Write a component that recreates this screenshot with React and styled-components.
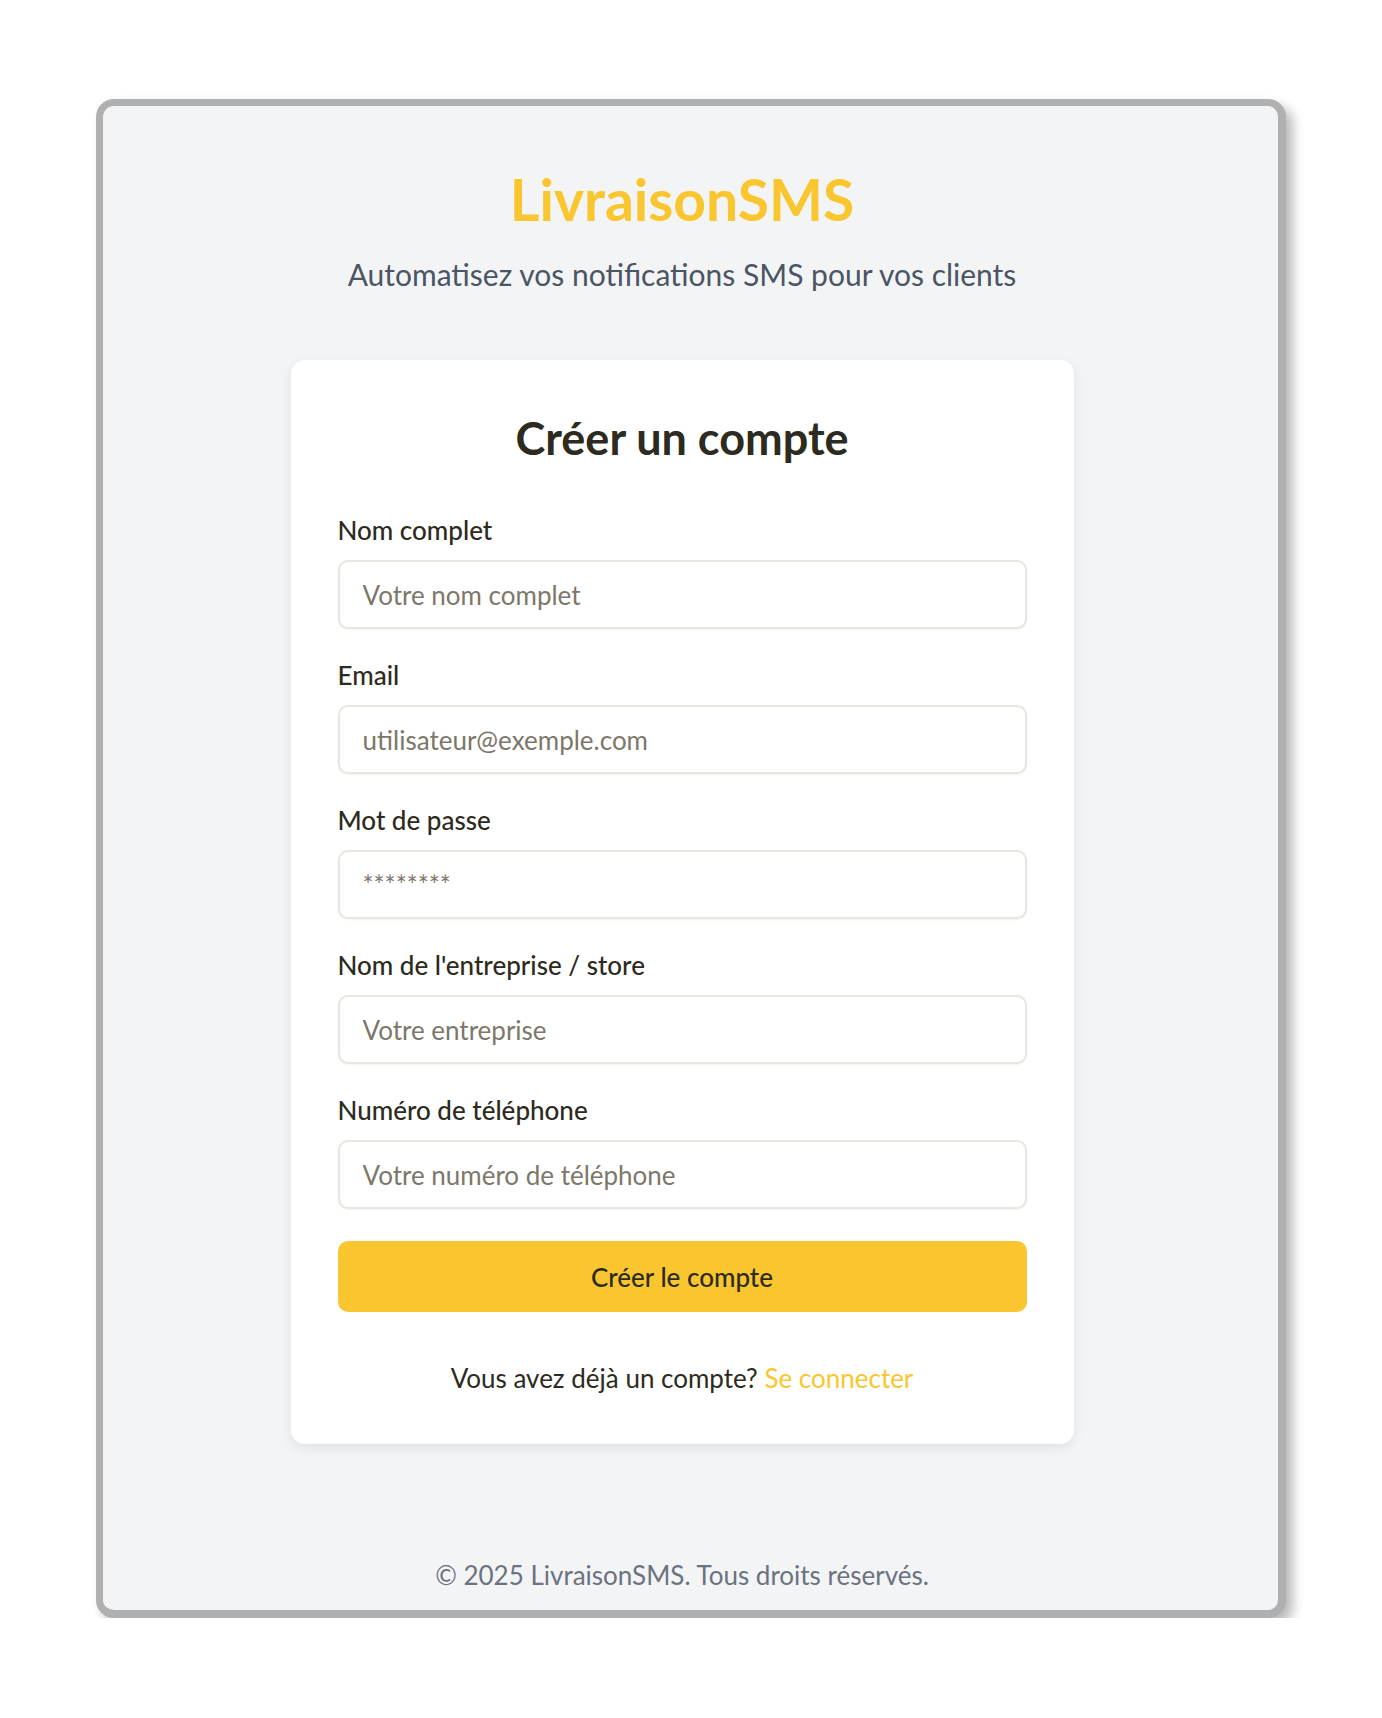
import React from 'react';
import styled, { createGlobalStyle } from 'styled-components';

const GlobalStyle = createGlobalStyle`
	* {
		box-sizing: border-box;
	}
	body {
		margin: 0;
		background: #ffffff;
		font-family: 'Lato', 'Noto Sans', sans-serif;
	}
`;

const Frame = styled.div`
	margin: 99px 0 0 96px;
	width: 1190px;
	height: 1519px;
	border: 7px solid #b0b0b0;
	border-right-width: 8px;
	border-bottom-width: 8px;
	border-radius: 18px;
	background: #f3f4f6;
	box-shadow: 7px 7px 12px rgba(0, 0, 0, 0.28);
	display: flex;
	flex-direction: column;
	align-items: center;
	padding: 59px 17px 19px 0;
`;

const Brand = styled.h1`
	margin: 0;
	font-size: 57px;
	line-height: 69px;
	font-weight: 700;
	color: #f9c62f;
`;

const Tagline = styled.p`
	margin: 22px 0 0;
	font-size: 30px;
	line-height: 37px;
	color: #4b5563;
`;

const Card = styled.div`
	margin-top: 67px;
	width: 783px;
	background: #ffffff;
	border-radius: 14px;
	box-shadow: 0 4px 12px rgba(0, 0, 0, 0.08);
	padding: 52px 47px 50px;
	display: flex;
	flex-direction: column;
`;

const Heading = styled.h2`
	margin: 0 0 49px;
	text-align: center;
	font-size: 45px;
	line-height: 53px;
	font-weight: 700;
	color: #2d2a20;
`;

const Field = styled.div`
	display: flex;
	flex-direction: column;
	margin-bottom: 30px;
`;

const Label = styled.label`
	font-size: 26px;
	line-height: 32px;
	font-weight: 500;
	color: #2d2a20;
	margin-bottom: 14px;
`;

const Input = styled.input`
	height: 69px;
	width: 100%;
	border: 2px solid #e9e6df;
	border-radius: 10px;
	background: #ffffff;
	box-shadow: 0 1px 2px rgba(0, 0, 0, 0.05);
	padding: 0 23px;
	font-family: inherit;
	font-size: 26px;
	color: #2d2a20;
	outline: none;

	&::placeholder {
		color: #7d776a;
	}
`;

const Submit = styled.button`
	margin-top: 2px;
	height: 71px;
	width: 100%;
	border: none;
	border-radius: 10px;
	background: #f9c62f;
	font-family: inherit;
	font-size: 26px;
	font-weight: 500;
	color: #2d2a20;
	cursor: pointer;
`;

const Switch = styled.p`
	margin: 50px 0 0;
	text-align: center;
	font-size: 26px;
	line-height: 32px;
	color: #2d2a20;
`;

const SwitchLink = styled.a`
	color: #f9c62f;
	text-decoration: none;
`;

const Footer = styled.footer`
	margin-top: auto;
	font-size: 26px;
	line-height: 31px;
	color: #6b7280;
`;

const fields = [
	{ id: 'name', label: 'Nom complet', type: 'text', placeholder: 'Votre nom complet' },
	{ id: 'email', label: 'Email', type: 'email', placeholder: 'utilisateur@exemple.com' },
	{ id: 'password', label: 'Mot de passe', type: 'password', placeholder: '********' },
	{ id: 'company', label: "Nom de l'entreprise / store", type: 'text', placeholder: 'Votre entreprise' },
	{ id: 'phone', label: 'Numéro de téléphone', type: 'tel', placeholder: 'Votre numéro de téléphone' },
];

const App = () => {
	return (
		<>
			<GlobalStyle />
			<Frame>
				<Brand>LivraisonSMS</Brand>
				<Tagline>Automatisez vos notifications SMS pour vos clients</Tagline>
				<Card>
					<Heading>Créer un compte</Heading>
					{fields.map((f) => (
						<Field key={f.id}>
							<Label htmlFor={f.id}>{f.label}</Label>
							<Input id={f.id} type={f.type} placeholder={f.placeholder} />
						</Field>
					))}
					<Submit type='button'>Créer le compte</Submit>
					<Switch>
						Vous avez déjà un compte? <SwitchLink href='#'>Se connecter</SwitchLink>
					</Switch>
				</Card>
				<Footer>© 2025 LivraisonSMS. Tous droits réservés.</Footer>
			</Frame>
		</>
	);
};

export default App;
